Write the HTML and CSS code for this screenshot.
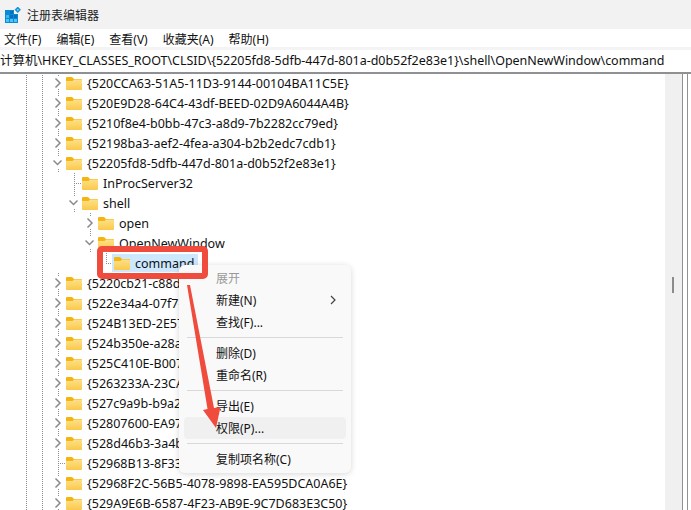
FILE: index.html
```html
<!DOCTYPE html>
<html lang="zh-CN">
<head>
<meta charset="utf-8">
<title>注册表编辑器</title>
<link rel="stylesheet" href="styles.css">
</head>
<body>
<svg class="defs" width="0" height="0">
  <defs>
    <linearGradient id="front" x1="0" y1="0" x2="0" y2="1">
      <stop offset="0" stop-color="#fde08a"/>
      <stop offset="1" stop-color="#fbc94a"/>
    </linearGradient>
    <symbol id="folder" viewBox="0 0 16 13">
      <path fill="#f6b40e" d="M0 1a1 1 0 0 1 1-1h5l2 2h7a1 1 0 0 1 1 1v2H0z"/>
      <path fill="url(#front)" d="M0 4h6.500l1.500-1.500h7a1 1 0 0 1 1 1V12a1 1 0 0 1-1 1H1a1 1 0 0 1-1-1z"/>
    </symbol>
    <symbol id="right" viewBox="0 0 14 12"><path d="M3.500 1.500L8 6l-4.500 4.500"/></symbol>
    <symbol id="down" viewBox="0 0 14 12"><path d="M1.500 3.500l4 4 4-4"/></symbol>
  </defs>
</svg>
<div class="window">
  <header class="titlebar">
    <svg class="appicon" width="19" height="19" viewBox="0 0 19 19">
      <rect x="0" y="3" width="13" height="13" fill="#0a8ad6"/>
      <rect x="1" y="4" width="3" height="3" fill="#0a8ad6"/>
      <rect x="5" y="4" width="3" height="3" fill="#0b6fb8"/>
      <rect x="1" y="8" width="3" height="3" fill="#3fb8ee"/>
      <rect x="5" y="8" width="3" height="3" fill="#0b6fb8"/>
      <rect x="9" y="8" width="3" height="3" fill="#0b6fb8"/>
      <rect x="1" y="12" width="3" height="3" fill="#4cc4f4"/>
      <rect x="5" y="12" width="3" height="3" fill="#4cc4f4"/>
      <rect x="9" y="12" width="3" height="3" fill="#4cc4f4"/>
      <rect x="9" y="3" width="4" height="4" fill="#f2f2f2"/>
      <rect x="10.500" y="0.500" width="4.500" height="4.500" transform="rotate(45 12.750 2.750)" fill="#1592d8"/>
      <rect x="12" y="2" width="1.500" height="1.500" fill="#8fdcf8"/>
    </svg>
    <span class="title">注册表编辑器</span>
  </header>
  <nav class="menubar">
    <span>文件(F)</span><span>编辑(E)</span><span>查看(V)</span><span>收藏夹(A)</span><span>帮助(H)</span>
  </nav>
  <div class="address">计算机\HKEY_CLASSES_ROOT\CLSID\{52205fd8-5dfb-447d-801a-d0b52f2e83e1}\shell\OpenNewWindow\command</div>
  <main class="pane">
    <div class="tree">
      <div class="row l1"><svg class="chev"><use href="#right"/></svg><svg class="folder"><use href="#folder"/></svg><span>{520CCA63-51A5-11D3-9144-00104BA11C5E}</span></div>
      <div class="row l1"><svg class="chev"><use href="#right"/></svg><svg class="folder"><use href="#folder"/></svg><span>{520E9D28-64C4-43df-BEED-02D9A6044A4B}</span></div>
      <div class="row l1"><svg class="chev"><use href="#right"/></svg><svg class="folder"><use href="#folder"/></svg><span>{5210f8e4-b0bb-47c3-a8d9-7b2282cc79ed}</span></div>
      <div class="row l1"><svg class="chev"><use href="#right"/></svg><svg class="folder"><use href="#folder"/></svg><span>{52198ba3-aef2-4fea-a304-b2b2edc7cdb1}</span></div>
      <div class="row l1"><svg class="chev"><use href="#down"/></svg><svg class="folder"><use href="#folder"/></svg><span>{52205fd8-5dfb-447d-801a-d0b52f2e83e1}</span></div>
      <div class="row l2"><i class="leaf"></i><svg class="folder"><use href="#folder"/></svg><span>InProcServer32</span></div>
      <div class="row l2"><svg class="chev"><use href="#down"/></svg><svg class="folder"><use href="#folder"/></svg><span>shell</span></div>
      <div class="row l3"><svg class="chev"><use href="#right"/></svg><svg class="folder"><use href="#folder"/></svg><span>open</span></div>
      <div class="row l3"><svg class="chev"><use href="#down"/></svg><svg class="folder"><use href="#folder"/></svg><span>OpenNewWindow</span></div>
      <div class="row l4"><i class="leaf short"></i><div class="selection"><svg class="folder"><use href="#folder"/></svg><span>command</span></div></div>
      <div class="row l1"><svg class="chev"><use href="#right"/></svg><svg class="folder"><use href="#folder"/></svg><span>{5220cb21-c88d-11cf-b347-00aa00a28331}</span></div>
      <div class="row l1"><svg class="chev"><use href="#right"/></svg><svg class="folder"><use href="#folder"/></svg><span>{522e34a4-07f7-4d1c-a1d9-0a7e2a2f0c11}</span></div>
      <div class="row l1"><svg class="chev"><use href="#right"/></svg><svg class="folder"><use href="#folder"/></svg><span>{524B13ED-2E57-40B6-A8E2-6A0D6E7F3A10}</span></div>
      <div class="row l1"><svg class="chev"><use href="#right"/></svg><svg class="folder"><use href="#folder"/></svg><span>{524b350e-a28a-4f1c-9a3e-1c7d2b6e4f20}</span></div>
      <div class="row l1"><svg class="chev"><use href="#right"/></svg><svg class="folder"><use href="#folder"/></svg><span>{525C410E-B007-4A12-9C3D-7E1F2A6B8D30}</span></div>
      <div class="row l1"><svg class="chev"><use href="#right"/></svg><svg class="folder"><use href="#folder"/></svg><span>{5263233A-23CA-4B1D-8E2F-3C4D5E6F7A40}</span></div>
      <div class="row l1"><svg class="chev"><use href="#right"/></svg><svg class="folder"><use href="#folder"/></svg><span>{527c9a9b-b9a2-4f1d-8a2c-5d6e7f8a9b50}</span></div>
      <div class="row l1"><svg class="chev"><use href="#right"/></svg><svg class="folder"><use href="#folder"/></svg><span>{52807600-EA97-4C1E-9B3D-6E7F8A9B0C60}</span></div>
      <div class="row l1"><svg class="chev"><use href="#right"/></svg><svg class="folder"><use href="#folder"/></svg><span>{528d46b3-3a4b-4e1f-8c2d-7f8a9b0c1d70}</span></div>
      <div class="row l1"><i class="leaf"></i><svg class="folder"><use href="#folder"/></svg><span>{52968B13-8F33-4A2B-9D3E-8A9B0C1D2E80}</span></div>
      <div class="row l1"><svg class="chev"><use href="#right"/></svg><svg class="folder"><use href="#folder"/></svg><span>{52968F2C-56B5-4078-9898-EA595DCA0A6E}</span></div>
      <div class="row l1"><svg class="chev"><use href="#right"/></svg><svg class="folder"><use href="#folder"/></svg><span>{529A9E6B-6587-4F23-AB9E-9C7D683E3C50}</span></div>
    </div>
    <div class="scrollbar"><div class="thumb"></div></div>
    <div class="divider"></div>
  </main>

  <div class="menu">
    <div class="item disabled">展开</div>
    <div class="item sub">新建(N)<svg class="subarrow" viewBox="0 0 8 12"><path d="M2 2l4 4-4 4"/></svg></div>
    <div class="item">查找(F)...</div>
    <hr>
    <div class="item">删除(D)</div>
    <div class="item">重命名(R)</div>
    <hr>
    <div class="item">导出(E)</div>
    <div class="item hover">权限(P)...</div>
    <hr>
    <div class="item">复制项名称(C)</div>
  </div>
  <div class="highlight"></div>
  <svg class="arrow" width="40" height="150" viewBox="0 0 40 150">
    <path d="M1 1 L4 1 L28 124 L34.500 123 L30 144 L17 126 L21.500 125 Z" fill="#f04c3e"/>
  </svg>
</div>
</body>
</html>
```
FILE: styles.css
```css
* { box-sizing: border-box; }
html, body { margin: 0; padding: 0; }
body {
  width: 691px;
  height: 510px;
  overflow: hidden;
  background: #fff;
  font-family: "Noto Sans", "Noto Sans CJK SC", sans-serif;
  color: #111;
}
.defs { position: absolute; }
.window { position: relative; width: 691px; height: 510px; overflow: hidden; }

.titlebar {
  display: flex;
  align-items: center;
  height: 29px;
  padding-left: 5px;
  gap: 3px;
  background: #f2f2f2;
}
.appicon { flex: none; margin-top: 3px; }
.title { font-size: 12px; color: #222; }

.menubar {
  display: flex;
  height: 18px;
  align-items: center;
  padding: 2px 0 0 4px;
  gap: 15px;
  font-size: 12px;
  background: #fff;
}

.address {
  position: relative;
  z-index: 1;
  height: 27px;
  line-height: 22px;
  font-size: 12.5px;
  letter-spacing: -0.03px;
  white-space: nowrap;
  overflow: hidden;
  background: #fff;
  border-top: 3px solid #f4f4f4;
  border-bottom: 2px solid #8e9094;
}

.pane { display: flex; height: 436px; }
.tree {
  flex: 1;
  margin-top: -1px;
  background-image:
    repeating-linear-gradient(#8c8c8c 0 1px, transparent 1px 2px),
    repeating-linear-gradient(#8c8c8c 0 1px, transparent 1px 2px);
  background-size: 1px 100%, 1px 100%;
  background-position: 26px 0, 42px 0;
  background-repeat: no-repeat;
}
.row {
  display: flex;
  align-items: center;
  height: 20px;
  font-size: 12.5px;
  white-space: nowrap;
  background-image: repeating-linear-gradient(#8c8c8c 0 1px, transparent 1px 2px);
  background-size: 1px 100%;
  background-repeat: no-repeat;
}
.l1 { padding-left: 52px; background-position: 58px 0; }
.l2 { padding-left: 68px; background-position: 74px 0; }
.l3 { padding-left: 84px; background-position: 90px 0; }
.l4 { padding-left: 102px; background-image: none; }
.chev {
  width: 14px;
  height: 12px;
  flex: none;
  background: #fff;
}
.chev use { fill: none; stroke: #8a8a8a; stroke-width: 1.5; }
.leaf {
  align-self: stretch;
  width: 8px;
  margin-left: 6px;
  flex: none;
  background:
    repeating-linear-gradient(90deg, #8c8c8c 0 1px, transparent 1px 2px) 0 50% / 100% 1px no-repeat;
}
.leaf.short {
  width: 6px;
  margin-left: 4px;
  background:
    repeating-linear-gradient(90deg, #8c8c8c 0 1px, transparent 1px 2px) 0 50% / 100% 1px no-repeat,
    repeating-linear-gradient(#8c8c8c 0 1px, transparent 1px 2px) 0 0 / 1px 50% no-repeat;
}
.folder { width: 16px; height: 13px; margin-right: 5px; flex: none; }
.selection {
  display: flex;
  align-items: center;
  height: 18px;
  padding: 0 4px 0 2px;
  background: #cce8ff;
}

.scrollbar {
  width: 17px;
  flex: none;
  background: #f0f0f0;
}
.thumb { width: 2px; height: 16px; margin: 203px 0 0 7px; background: #8b8b8b; }
.divider {
  width: 6px;
  flex: none;
  margin-right: 3px;
  border-left: 1px solid #8e9094;
  border-right: 1px solid #8e9094;
}

.menu {
  position: absolute;
  left: 179px;
  top: 265px;
  width: 172px;
  height: 208px;
  padding: 2px 5px 4px;
  background: #f9f9f9;
  border-radius: 6px;
  box-shadow: 0 1px 6px rgba(0,0,0,.16);
  font-size: 12px;
  color: #111;
}
.item {
  display: flex;
  align-items: center;
  height: 22px;
  padding-left: 32px;
  border-radius: 4px;
}
.item.disabled { color: #9a9a9a; }
.item.sub { justify-content: space-between; padding-right: 9px; }
.item.hover { background: #f0f0f0; }
.subarrow { width: 8px; height: 12px; }
.subarrow path { fill: none; stroke: #444; stroke-width: 1.2; }
.menu hr { border: 0; border-top: 1px solid #d9d9d9; margin: 4px 3px; }

.highlight {
  position: absolute;
  left: 97px;
  top: 246px;
  width: 111px;
  height: 33px;
  border: 6px solid #f04c3e;
  border-radius: 5px;
}
.arrow { position: absolute; left: 186px; top: 284px; }
```
